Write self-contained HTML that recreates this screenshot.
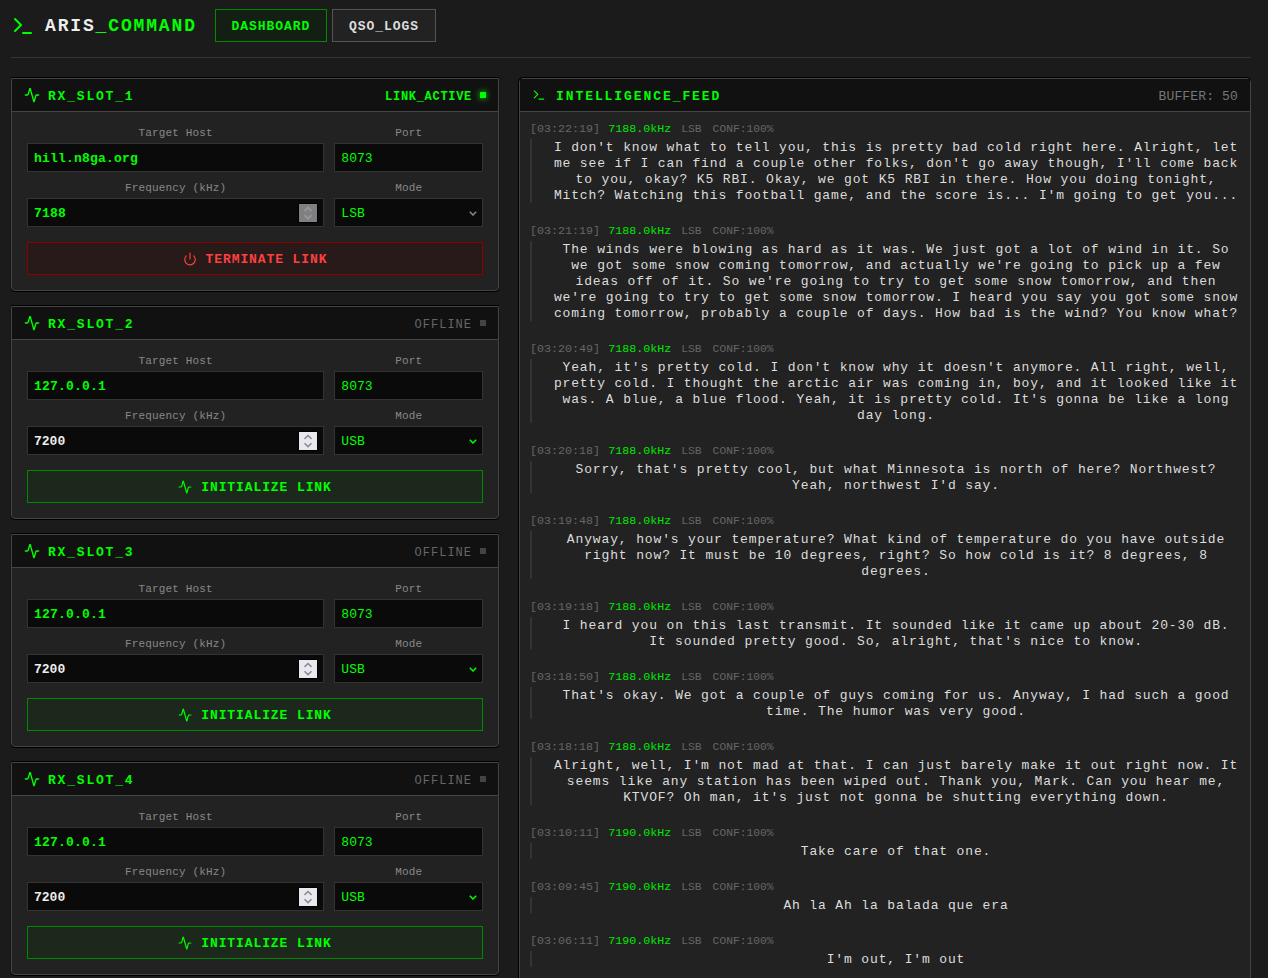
<!DOCTYPE html><html><head><meta charset="utf-8"><style>
*{box-sizing:border-box;margin:0;padding:0}
html,body{width:1268px;height:978px;overflow:hidden;background:#1b1b1b;font-family:"Liberation Mono",monospace;color:#ddd}
.abs{position:absolute}
.hdr-line{position:absolute;left:11px;top:57px;width:1240px;height:1px;background:#333}
.logo-icon{position:absolute;left:11px;top:14px;color:#00ff00;width:24px;height:24px}
.logo-icon svg{display:block}
.logo{position:absolute;left:45px;top:13px;height:26px;line-height:26px;font-size:18px;font-weight:bold;letter-spacing:1.85px;color:#eee;white-space:pre}
.logo span{color:#00ff00}
.nav{position:absolute;top:9px;height:33px;line-height:33px;font-size:13px;font-weight:bold;letter-spacing:0.95px;text-align:center;border:1px solid}
.nav.on{left:215px;width:112px;color:#00ff00;border-color:#008a00;background:#131f13}
.nav.off{left:332px;width:104px;color:#ddd;border-color:#555;background:#222}
.panel{position:absolute;border:1px solid #444;border-radius:1px 1px 4px 4px;background:#222;box-shadow:0 -1px 0 #000,0 1px 0 #000,-1px 0 0 #171717,1px 0 0 #171717}
.panel.feed{border-radius:4px 4px 0 0;box-shadow:0 -1px 0 #000,-1px 0 0 #000}
.ph{height:33px;background:#111;border-bottom:1px solid #444;border-radius:0;display:flex;align-items:center;padding:0 12px;position:relative}
.ph .ic{width:16px;height:16px;color:#00ff00;margin-right:8px}
.ph .ic svg{display:block}
.ph .title{font-size:13px;font-weight:bold;letter-spacing:1.8px;color:#00ff00;line-height:16px;position:relative;top:2px}
.ph .right{margin-left:auto;display:flex;align-items:center;font-size:12px;line-height:16px;letter-spacing:0.6px}
.ph .right span{position:relative;top:2px}
.led{width:6px;height:6px;margin-left:8px}
.led.on{background:#00ff00;box-shadow:0 0 6px #00ff00}
.led.off{background:#444}
.pb{padding:15px}
.grid{display:grid;grid-template-columns:2fr 1fr;column-gap:10px;row-gap:10px}
.lbl{font-size:11px;line-height:12px;height:12px;margin-bottom:4px;text-align:center;color:#888;white-space:pre;letter-spacing:0.15px}
.inp{height:29px;background:#0a0a0a;border:1px solid #333;padding:0 6px;font-size:13px;line-height:29px;color:#00ff00;white-space:pre;position:relative}
.inp.b{font-weight:bold;letter-spacing:0.2px}
.inp.w{color:#eee;font-weight:bold}
.spin{position:absolute;right:6px;top:5px;width:18px;height:18px;box-shadow:0 0 0 1px #000}
.spin.on{background:#e8e8ee}
.spin.dis{background:#808080}
.spin svg{position:absolute;left:0;top:0}
.chev{position:absolute;right:5px;top:12px}
.btn{margin-top:15px;height:33px;border:1px solid;display:flex;align-items:center;justify-content:center;font-size:13px;font-weight:bold;letter-spacing:0.9px}
.btn .ic{width:14px;height:14px;margin-right:9px}
.btn .tx{position:relative;top:1px}
.btn .ic svg{display:block}
.btn.init{color:#00ff00;border-color:#008a00;background:#1b281b}
.btn.term{color:#ff4040;border-color:#8b0000;background:#271a19}
.feed{left:519px;top:78px;width:732px;height:1000px}
.fb{padding:8px 10px 0 10px}
.ent{margin-bottom:19px}
.meta{height:16px;line-height:16px;font-size:11.7px;display:flex;gap:8px;margin-bottom:3px;white-space:pre;position:relative;top:1px}
.meta .t{color:#666}
.meta .f{color:#00e800}
.meta .m{color:#666;margin-left:2px;font-size:11.3px}
.meta .c{color:#666;margin-left:3px;font-size:11.3px}
.txt{border-left:2px solid #333;padding-left:20px;text-align:center;font-size:13px;line-height:16px;letter-spacing:0.86px;color:#ddd}
.txt span{position:relative;top:1px}
</style></head><body>
<div class="logo-icon"><svg width="24" height="24" viewBox="0 0 24 24" fill="none" stroke="currentColor" stroke-width="2" stroke-linecap="round" stroke-linejoin="round"><polyline points="4 17 10 11 4 5"/><line x1="12" x2="20" y1="19" y2="19"/></svg></div>
<div class="logo">ARIS<span>_COMMAND</span></div>
<div class="nav on">DASHBOARD</div>
<div class="nav off">QSO_LOGS</div>
<div class="hdr-line"></div>

<div class="panel" style="left:11px;top:78px;width:488px;height:213px">
  <div class="ph"><span class="ic"><svg width="16" height="16" viewBox="0 0 24 24" fill="none" stroke="currentColor" stroke-width="2" stroke-linecap="round" stroke-linejoin="round"><path d="M22 12h-2.48a2 2 0 0 0-1.93 1.46l-2.35 8.36a.25.25 0 0 1-.48 0L9.24 2.18a.25.25 0 0 0-.48 0l-2.35 8.36A2 2 0 0 1 4.49 12H2"/></svg></span><span class="title">RX_SLOT_1</span><div class="right"><span style="color:#00ff00;font-weight:bold;letter-spacing:0.7px">LINK_ACTIVE</span><div class="led on"></div></div></div>
  <div class="pb">
    <div class="grid">
      <div><div class="lbl">Target Host</div><div class="inp b">hill.n8ga.org</div></div>
      <div><div class="lbl">Port</div><div class="inp">8073</div></div>
      <div><div class="lbl">Frequency (kHz)</div><div class="inp b">7188<div class="spin dis"><svg width="18" height="18" viewBox="0 0 18 18" fill="none" stroke="#9a9aa6" stroke-width="1.5"><polyline points="5.5 6.9 9 3.5 12.5 6.9"/><polyline points="5.5 11.2 9 14.6 12.5 11.2"/></svg></div></div></div>
      <div><div class="lbl">Mode</div><div class="inp">LSB<svg class="chev" width="8" height="5" viewBox="0 0 8 5" fill="none" stroke="#888" stroke-width="1.5"><polyline points="0.8 0.8 4 4 7.2 0.8"/></svg></div></div>
    </div>
    <div class="btn term"><span class="ic"><svg width="14" height="14" viewBox="0 0 24 24" fill="none" stroke="currentColor" stroke-width="2" stroke-linecap="round" stroke-linejoin="round"><path d="M12 2v10"/><path d="M18.4 6.6a9 9 0 1 1-12.77.04"/></svg></span><span class="tx">TERMINATE LINK</span></div>
  </div>
</div>

<div class="panel" style="left:11px;top:306px;width:488px;height:213px">
  <div class="ph"><span class="ic"><svg width="16" height="16" viewBox="0 0 24 24" fill="none" stroke="currentColor" stroke-width="2" stroke-linecap="round" stroke-linejoin="round"><path d="M22 12h-2.48a2 2 0 0 0-1.93 1.46l-2.35 8.36a.25.25 0 0 1-.48 0L9.24 2.18a.25.25 0 0 0-.48 0l-2.35 8.36A2 2 0 0 1 4.49 12H2"/></svg></span><span class="title">RX_SLOT_2</span><div class="right"><span style="color:#666;letter-spacing:1px">OFFLINE</span><div class="led off"></div></div></div>
  <div class="pb">
    <div class="grid">
      <div><div class="lbl">Target Host</div><div class="inp b">127.0.0.1</div></div>
      <div><div class="lbl">Port</div><div class="inp">8073</div></div>
      <div><div class="lbl">Frequency (kHz)</div><div class="inp w">7200<div class="spin on"><svg width="18" height="18" viewBox="0 0 18 18" fill="none" stroke="#8a8a96" stroke-width="1.5"><polyline points="5.5 6.9 9 3.5 12.5 6.9"/><polyline points="5.5 11.2 9 14.6 12.5 11.2"/></svg></div></div></div>
      <div><div class="lbl">Mode</div><div class="inp">USB<svg class="chev" width="8" height="5" viewBox="0 0 8 5" fill="none" stroke="#00ff00" stroke-width="1.5"><polyline points="0.8 0.8 4 4 7.2 0.8"/></svg></div></div>
    </div>
    <div class="btn init"><span class="ic"><svg width="14" height="14" viewBox="0 0 24 24" fill="none" stroke="currentColor" stroke-width="2" stroke-linecap="round" stroke-linejoin="round"><path d="M22 12h-2.48a2 2 0 0 0-1.93 1.46l-2.35 8.36a.25.25 0 0 1-.48 0L9.24 2.18a.25.25 0 0 0-.48 0l-2.35 8.36A2 2 0 0 1 4.49 12H2"/></svg></span><span class="tx">INITIALIZE LINK</span></div>
  </div>
</div>

<div class="panel" style="left:11px;top:534px;width:488px;height:213px">
  <div class="ph"><span class="ic"><svg width="16" height="16" viewBox="0 0 24 24" fill="none" stroke="currentColor" stroke-width="2" stroke-linecap="round" stroke-linejoin="round"><path d="M22 12h-2.48a2 2 0 0 0-1.93 1.46l-2.35 8.36a.25.25 0 0 1-.48 0L9.24 2.18a.25.25 0 0 0-.48 0l-2.35 8.36A2 2 0 0 1 4.49 12H2"/></svg></span><span class="title">RX_SLOT_3</span><div class="right"><span style="color:#666;letter-spacing:1px">OFFLINE</span><div class="led off"></div></div></div>
  <div class="pb">
    <div class="grid">
      <div><div class="lbl">Target Host</div><div class="inp b">127.0.0.1</div></div>
      <div><div class="lbl">Port</div><div class="inp">8073</div></div>
      <div><div class="lbl">Frequency (kHz)</div><div class="inp w">7200<div class="spin on"><svg width="18" height="18" viewBox="0 0 18 18" fill="none" stroke="#8a8a96" stroke-width="1.5"><polyline points="5.5 6.9 9 3.5 12.5 6.9"/><polyline points="5.5 11.2 9 14.6 12.5 11.2"/></svg></div></div></div>
      <div><div class="lbl">Mode</div><div class="inp">USB<svg class="chev" width="8" height="5" viewBox="0 0 8 5" fill="none" stroke="#00ff00" stroke-width="1.5"><polyline points="0.8 0.8 4 4 7.2 0.8"/></svg></div></div>
    </div>
    <div class="btn init"><span class="ic"><svg width="14" height="14" viewBox="0 0 24 24" fill="none" stroke="currentColor" stroke-width="2" stroke-linecap="round" stroke-linejoin="round"><path d="M22 12h-2.48a2 2 0 0 0-1.93 1.46l-2.35 8.36a.25.25 0 0 1-.48 0L9.24 2.18a.25.25 0 0 0-.48 0l-2.35 8.36A2 2 0 0 1 4.49 12H2"/></svg></span><span class="tx">INITIALIZE LINK</span></div>
  </div>
</div>

<div class="panel" style="left:11px;top:762px;width:488px;height:213px">
  <div class="ph"><span class="ic"><svg width="16" height="16" viewBox="0 0 24 24" fill="none" stroke="currentColor" stroke-width="2" stroke-linecap="round" stroke-linejoin="round"><path d="M22 12h-2.48a2 2 0 0 0-1.93 1.46l-2.35 8.36a.25.25 0 0 1-.48 0L9.24 2.18a.25.25 0 0 0-.48 0l-2.35 8.36A2 2 0 0 1 4.49 12H2"/></svg></span><span class="title">RX_SLOT_4</span><div class="right"><span style="color:#666;letter-spacing:1px">OFFLINE</span><div class="led off"></div></div></div>
  <div class="pb">
    <div class="grid">
      <div><div class="lbl">Target Host</div><div class="inp b">127.0.0.1</div></div>
      <div><div class="lbl">Port</div><div class="inp">8073</div></div>
      <div><div class="lbl">Frequency (kHz)</div><div class="inp w">7200<div class="spin on"><svg width="18" height="18" viewBox="0 0 18 18" fill="none" stroke="#8a8a96" stroke-width="1.5"><polyline points="5.5 6.9 9 3.5 12.5 6.9"/><polyline points="5.5 11.2 9 14.6 12.5 11.2"/></svg></div></div></div>
      <div><div class="lbl">Mode</div><div class="inp">USB<svg class="chev" width="8" height="5" viewBox="0 0 8 5" fill="none" stroke="#00ff00" stroke-width="1.5"><polyline points="0.8 0.8 4 4 7.2 0.8"/></svg></div></div>
    </div>
    <div class="btn init"><span class="ic"><svg width="14" height="14" viewBox="0 0 24 24" fill="none" stroke="currentColor" stroke-width="2" stroke-linecap="round" stroke-linejoin="round"><path d="M22 12h-2.48a2 2 0 0 0-1.93 1.46l-2.35 8.36a.25.25 0 0 1-.48 0L9.24 2.18a.25.25 0 0 0-.48 0l-2.35 8.36A2 2 0 0 1 4.49 12H2"/></svg></span><span class="tx">INITIALIZE LINK</span></div>
  </div>
</div>

<div class="panel feed">
  <div class="ph"><span class="ic" style="width:14px;height:14px;margin-right:10px"><svg width="14" height="14" viewBox="0 0 24 24" fill="none" stroke="currentColor" stroke-width="2" stroke-linecap="round" stroke-linejoin="round"><polyline points="4 17 10 11 4 5"/><line x1="12" x2="20" y1="19" y2="19"/></svg></span><span class="title" style="letter-spacing:1.92px">INTELLIGENCE_FEED</span><div class="right" style="color:#777;font-size:13px;letter-spacing:0.15px"><span>BUFFER: 50</span></div></div>
  <div class="fb"><div class="ent"><div class="meta"><span class="t">[03:22:19]</span><span class="f">7188.0kHz</span><span class="m">LSB</span><span class="c">CONF:100%</span></div><div class="txt"><span>I don&#x27;t know what to tell you, this is pretty bad cold right here. Alright, let me see if I can find a couple other folks, don&#x27;t go away though, I&#x27;ll come back to you, okay? K5 RBI. Okay, we got K5 RBI in there. How you doing tonight, Mitch? Watching this football game, and the score is... I&#x27;m going to get you...</span></div></div><div class="ent"><div class="meta"><span class="t">[03:21:19]</span><span class="f">7188.0kHz</span><span class="m">LSB</span><span class="c">CONF:100%</span></div><div class="txt"><span>The winds were blowing as hard as it was. We just got a lot of wind in it. So we got some snow coming tomorrow, and actually we&#x27;re going to pick up a few ideas off of it. So we&#x27;re going to try to get some snow tomorrow, and then we&#x27;re going to try to get some snow tomorrow. I heard you say you got some snow coming tomorrow, probably a couple of days. How bad is the wind? You know what?</span></div></div><div class="ent"><div class="meta"><span class="t">[03:20:49]</span><span class="f">7188.0kHz</span><span class="m">LSB</span><span class="c">CONF:100%</span></div><div class="txt"><span>Yeah, it&#x27;s pretty cold. I don&#x27;t know why it doesn&#x27;t anymore. All right, well, pretty cold. I thought the arctic air was coming in, boy, and it looked like it was. A blue, a blue flood. Yeah, it is pretty cold. It&#x27;s gonna be like a long day long.</span></div></div><div class="ent"><div class="meta"><span class="t">[03:20:18]</span><span class="f">7188.0kHz</span><span class="m">LSB</span><span class="c">CONF:100%</span></div><div class="txt"><span>Sorry, that&#x27;s pretty cool, but what Minnesota is north of here? Northwest? Yeah, northwest I&#x27;d say.</span></div></div><div class="ent"><div class="meta"><span class="t">[03:19:48]</span><span class="f">7188.0kHz</span><span class="m">LSB</span><span class="c">CONF:100%</span></div><div class="txt"><span>Anyway, how&#x27;s your temperature? What kind of temperature do you have outside right now? It must be 10 degrees, right? So how cold is it? 8 degrees, 8 degrees.</span></div></div><div class="ent"><div class="meta"><span class="t">[03:19:18]</span><span class="f">7188.0kHz</span><span class="m">LSB</span><span class="c">CONF:100%</span></div><div class="txt"><span>I heard you on this last transmit. It sounded like it came up about 20-30 dB. It sounded pretty good. So, alright, that&#x27;s nice to know.</span></div></div><div class="ent"><div class="meta"><span class="t">[03:18:50]</span><span class="f">7188.0kHz</span><span class="m">LSB</span><span class="c">CONF:100%</span></div><div class="txt"><span>That&#x27;s okay. We got a couple of guys coming for us. Anyway, I had such a good time. The humor was very good.</span></div></div><div class="ent"><div class="meta"><span class="t">[03:18:18]</span><span class="f">7188.0kHz</span><span class="m">LSB</span><span class="c">CONF:100%</span></div><div class="txt"><span>Alright, well, I&#x27;m not mad at that. I can just barely make it out right now. It seems like any station has been wiped out. Thank you, Mark. Can you hear me, KTVOF? Oh man, it&#x27;s just not gonna be shutting everything down.</span></div></div><div class="ent"><div class="meta"><span class="t">[03:10:11]</span><span class="f">7190.0kHz</span><span class="m">LSB</span><span class="c">CONF:100%</span></div><div class="txt"><span>Take care of that one.</span></div></div><div class="ent"><div class="meta"><span class="t">[03:09:45]</span><span class="f">7190.0kHz</span><span class="m">LSB</span><span class="c">CONF:100%</span></div><div class="txt"><span>Ah la Ah la balada que era</span></div></div><div class="ent"><div class="meta"><span class="t">[03:06:11]</span><span class="f">7190.0kHz</span><span class="m">LSB</span><span class="c">CONF:100%</span></div><div class="txt"><span>I&#x27;m out, I&#x27;m out</span></div></div></div>
</div>
</body></html>
